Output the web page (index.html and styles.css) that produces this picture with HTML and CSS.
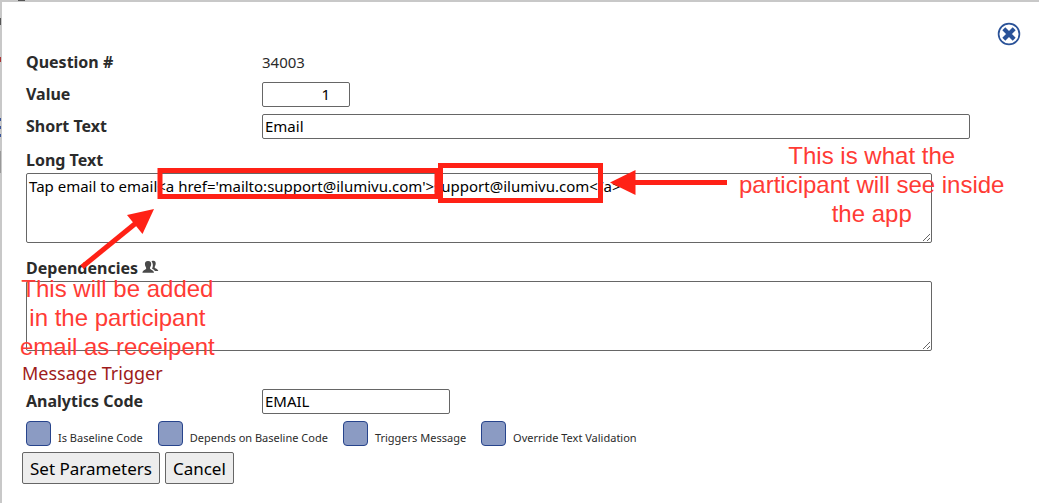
FILE: index.html
```html
<!DOCTYPE html>
<html lang="en">
<head>
  <meta charset="UTF-8" />
  <meta name="viewport" content="width=device-width, initial-scale=1.0"/>
  <title>Question Parameters</title>
  <link rel="stylesheet" href="styles.css">
</head>
<body>

  <div class="dialog">
    <button class="close-btn" type="button" aria-label="Close">
      <svg width="24" height="24" viewBox="0 0 24 24">
        <circle cx="12" cy="12" r="10.4" fill="#fff" stroke="#2a5298" stroke-width="1.7"/>
        <path d="M8.300 8.300 L15.700 15.700 M15.700 8.300 L8.300 15.700" stroke="#2a5298" stroke-width="4.2" stroke-linecap="square" fill="none"/>
      </svg>
    </button>

    <form>
      <div class="row">
        <span class="label">Question #</span>
        <span class="number">34003</span>
      </div>
      <div class="row">
        <label class="label" for="value">Value</label>
        <input class="field value" id="value" type="text" value="1">
      </div>
      <div class="row">
        <label class="label" for="shortText">Short Text</label>
        <input class="field" id="shortText" type="text" value="Email">
      </div>

      <div class="block">
        <label class="label" for="longText">Long Text</label>
        <textarea id="longText" spellcheck="false">Tap email to email&lt;a href='mailto:support@ilumivu.com'&gt;support@ilumivu.com&lt;/a&gt;</textarea>
      </div>

      <div class="block dependencies">
        <label class="label" for="dependencies">Dependencies
          <svg width="17" height="14" viewBox="0 0 17 14" fill="#4a4a4a">
            <path d="M9.5 1.2 C12.5 -0.2 14.2 1.4 13.6 4.4 C13.4 5.8 12.6 6.4 12.7 7.4 C13 8.6 16 8.6 16.3 11 H12.8 C12.4 9.6 10.6 9.2 10 8.6 C11 7 11.4 3.6 9.5 1.2 Z"/>
            <path d="M6 1 C8.6 1 9.5 2.6 9.1 5 C8.9 6.5 7.9 7.2 8 8.4 C8.3 9.8 11.6 9.6 12 12.8 H0.4 C0.8 9.6 4 9.8 4.2 8.4 C4.2 7.2 3.2 6.5 3 5 C2.6 2.6 3.6 1 6 1 Z"/>
          </svg>
        </label>
        <textarea id="dependencies"></textarea>
      </div>

      <h2>Message Trigger</h2>

      <div class="row">
        <label class="label" for="code">Analytics Code</label>
        <input class="field code" id="code" type="text" value="EMAIL">
      </div>

      <div class="checks">
        <label><input type="checkbox"><span>Is Baseline Code</span></label>
        <label><input type="checkbox"><span>Depends on Baseline Code</span></label>
        <label><input type="checkbox"><span>Triggers Message</span></label>
        <label><input type="checkbox"><span>Override Text Validation</span></label>
      </div>

      <div class="buttons">
        <button type="button">Set Parameters</button>
        <button type="button">Cancel</button>
      </div>
    </form>
  </div>

  <!-- notes drawn over the dialog -->
  <svg class="marks" width="740" height="280" viewBox="0 0 740 280">
    <rect x="160" y="170.500" width="277" height="26" fill="none" stroke="#ff2116" stroke-width="5"/>
    <rect x="440.500" y="165.500" width="160" height="35" fill="none" stroke="#ff2116" stroke-width="5"/>
    <path d="M82 267 L136 223" stroke="#ff2116" stroke-width="5"/>
    <path d="M154 209 L127 215 L142.500 234 Z" fill="#ff2116"/>
    <path d="M727 182.500 H632" stroke="#ff2116" stroke-width="5"/>
    <path d="M610 182.500 L635.500 170 V195 Z" fill="#ff2116"/>
  </svg>
  <p class="note note-recipient">This will be added<br>in the participant<br>email as receipent</p>
  <p class="note note-app">This is what the<br>participant will see inside<br>the app</p>

</body>
</html>
```
FILE: styles.css
```css
* {
  box-sizing: border-box;
}
body {
  margin: 0;
  padding: 2px 0 0 2px;
  min-height: 100vh;
  display: flex;
  position: relative;
  overflow: hidden;
  /* edge of the dimmed page behind the dialog */
  background:
    linear-gradient(#555, #555) 18px 0 / 7px 1px no-repeat,
    linear-gradient(#555, #555) 0 18px / 1px 7px no-repeat,
    linear-gradient(#a33, #a33) 0 57px / 1px 5px no-repeat,
    linear-gradient(#3a5599, #3a5599) 0 118px / 1px 3px no-repeat,
    linear-gradient(#3a5599, #3a5599) 0 126px / 1px 3px no-repeat,
    linear-gradient(#3a5599, #3a5599) 0 134px / 1px 3px no-repeat,
    linear-gradient(#999, #999) 0 151px / 1px 22px no-repeat,
    #c8c8c8;
  font-family: "Noto Sans", Tahoma, sans-serif;
  font-size: 15px;
  color: #2b2b2b;
}
.dialog {
  flex: 1;
  position: relative;
  padding: 48px 24px 0;
  background: #fff;
}
.close-btn {
  position: absolute;
  top: 20px;
  right: 18px;
  padding: 0;
  border: none;
  background: none;
  cursor: pointer;
}
.close-btn svg {
  display: block;
}
.row {
  display: grid;
  grid-template-columns: 236px 1fr;
  align-items: start;
  height: 25px;
  margin-bottom: 7px;
  padding-right: 45px;
}
.label {
  font-size: 16px;
  font-weight: bold;
}
.label,
.number {
  line-height: 24px;
}
.field,
textarea {
  border: 1px solid #666;
  border-radius: 2px;
  background: #fff;
  color: #000;
  font-family: "Noto Sans", "Trebuchet MS", sans-serif;
  font-size: 15px;
}
.field {
  width: 100%;
  height: 25px;
  padding: 0 2px 2px;
}
.value {
  width: 88px;
  padding-right: 19px;
  text-align: right;
}
.code {
  width: 188px;
}
.block {
  margin-top: 8px;
  padding-right: 83px;
}
.block .label {
  display: block;
  line-height: 26px;
}
.dependencies {
  margin-top: 12px;
}
textarea {
  display: block;
  width: 100%;
  height: 70px;
  padding: 1px 2px;
  line-height: 22px;
}
h2 {
  margin: 8px 0 2px -4px;
  font-size: 18px;
  font-weight: normal;
  line-height: 28px;
  color: #9e1b1b;
}
.checks {
  display: flex;
  gap: 15px;
  font-size: 11px;
  line-height: 16px;
}
.checks label {
  display: flex;
  align-items: flex-end;
  gap: 7px;
}
.checks input {
  appearance: none;
  width: 25px;
  height: 25px;
  margin: 0;
  border: 1px solid #27448c;
  border-radius: 4px;
  background: #8b9bc3;
}
.checks input:checked {
  background: #27448c;
}
.buttons {
  display: flex;
  gap: 5px;
  margin: 6px 0 0 -4px;
}
.buttons button {
  height: 32px;
  padding: 0 7px;
  border: 1px solid #666;
  border-radius: 2px;
  background: #ededed;
  color: #000;
  font-family: "Noto Sans", "Trebuchet MS", sans-serif;
  font-size: 17px;
}
.marks {
  position: absolute;
  top: 0;
  left: 0;
  pointer-events: none;
}
.note {
  position: absolute;
  margin: 0;
  font-family: "Liberation Sans", Arial, sans-serif;
  font-size: 24px;
  line-height: 29px;
  text-align: center;
  white-space: nowrap;
  color: #ff3b35;
  pointer-events: none;
}
.note-recipient {
  top: 274px;
  left: 20px;
}
.note-app {
  top: 141px;
  left: 739px;
}
```
